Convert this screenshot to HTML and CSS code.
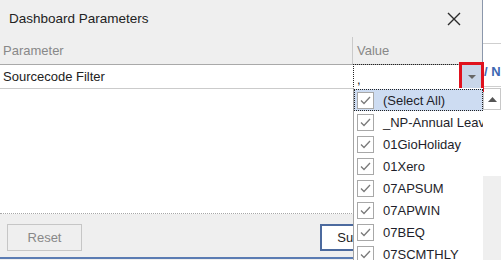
FILE: index.html
```html
<!DOCTYPE html>
<html>
<head>
<meta charset="utf-8">
<link rel="stylesheet" href="styles.css">
</head>
<body>
<div class="screen">
  <div class="dialog">
    <div class="titlebar">
      <span class="title">Dashboard Parameters</span>
      <svg class="close" width="14" height="14" viewBox="0 0 14 14"><path d="M1 1 L13 13 M13 1 L1 13" stroke="#2b2b2b" stroke-width="1.4" fill="none"/></svg>
    </div>
    <div class="grid-head">
      <div class="col-param">Parameter</div>
      <div class="col-value">Value</div>
    </div>
    <div class="grid-row">
      <div class="cell-param">Sourcecode Filter</div>
      <div class="cell-value">,</div>
    </div>
    <div class="grid-body"></div>
    <div class="footer">
      <button class="btn btn-reset">Reset</button>
      <button class="btn btn-primary">Submit</button>
    </div>
  </div>
  <div class="outside">
    <div class="out-top"></div>
    <div class="out-row"><span class="out-text">/ N</span></div>
    <div class="out-arrow">
      <svg width="9" height="5" viewBox="0 0 9 5"><path d="M0 5 L4.5 0 L9 5 Z" fill="#555"/></svg>
    </div>
    <div class="out-thumb"></div>
    <div class="out-track"></div>
  </div>

  <div class="dropbtn">
    <svg width="8" height="4" viewBox="0 0 8 4"><path d="M0 0 L8 0 L4 4 Z" fill="#666"/></svg>
  </div>

  <div class="droplist">
    <div class="item selected"><span class="chk"><svg width="11" height="9" viewBox="0 0 11 9"><path d="M1 4.5 L4 7.5 L10 1" stroke="#7a7a7a" stroke-width="1.3" fill="none"/></svg></span><span class="label">(Select All)</span></div>
    <div class="item"><span class="chk"><svg width="11" height="9" viewBox="0 0 11 9"><path d="M1 4.5 L4 7.5 L10 1" stroke="#7a7a7a" stroke-width="1.3" fill="none"/></svg></span><span class="label">_NP-Annual Leave</span></div>
    <div class="item"><span class="chk"><svg width="11" height="9" viewBox="0 0 11 9"><path d="M1 4.5 L4 7.5 L10 1" stroke="#7a7a7a" stroke-width="1.3" fill="none"/></svg></span><span class="label">01GioHoliday</span></div>
    <div class="item"><span class="chk"><svg width="11" height="9" viewBox="0 0 11 9"><path d="M1 4.5 L4 7.5 L10 1" stroke="#7a7a7a" stroke-width="1.3" fill="none"/></svg></span><span class="label">01Xero</span></div>
    <div class="item"><span class="chk"><svg width="11" height="9" viewBox="0 0 11 9"><path d="M1 4.5 L4 7.5 L10 1" stroke="#7a7a7a" stroke-width="1.3" fill="none"/></svg></span><span class="label">07APSUM</span></div>
    <div class="item"><span class="chk"><svg width="11" height="9" viewBox="0 0 11 9"><path d="M1 4.5 L4 7.5 L10 1" stroke="#7a7a7a" stroke-width="1.3" fill="none"/></svg></span><span class="label">07APWIN</span></div>
    <div class="item"><span class="chk"><svg width="11" height="9" viewBox="0 0 11 9"><path d="M1 4.5 L4 7.5 L10 1" stroke="#7a7a7a" stroke-width="1.3" fill="none"/></svg></span><span class="label">07BEQ</span></div>
    <div class="item"><span class="chk"><svg width="11" height="9" viewBox="0 0 11 9"><path d="M1 4.5 L4 7.5 L10 1" stroke="#7a7a7a" stroke-width="1.3" fill="none"/></svg></span><span class="label">07SCMTHLY</span></div>
  </div>
</div>
</body>
</html>
```

FILE: styles.css
```css
* { box-sizing: border-box; }
html, body { margin: 0; padding: 0; }
body {
  background: #efefef;
  font-family: "Liberation Sans", Arial, sans-serif;
  font-size: 13px;
  color: #222;
}
.screen {
  position: relative;
  width: 501px;
  height: 260px;
  overflow: hidden;
  display: flex;
  align-items: flex-start;
}
.dialog {
  width: 483px;
  height: 259px;
  flex: none;
  display: flex;
  flex-direction: column;
  background: #efefef;
  border-right: 1px solid #8b97ab;
  border-bottom: 2px solid #5b7cb3;
}
.titlebar {
  height: 37px;
  display: flex;
  align-items: center;
  padding-left: 9px;
  padding-right: 21px;
}
.title { color: #222; font-size: 13.5px; }
.close { margin-left: auto; }
.grid-head {
  height: 28px;
  display: flex;
  border-bottom: 1px solid #a9a9a9;
  color: #888;
}
.col-param {
  width: 353px;
  padding-left: 3px;
  border-right: 1px solid #cacaca;
  display: flex;
  align-items: center;
}
.col-value {
  padding-left: 4px;
  display: flex;
  align-items: center;
}
.grid-row {
  height: 24px;
  display: flex;
  background: #fff;
  border-bottom: 1px solid #cbcbcb;
}
.cell-param {
  width: 353px;
  padding-left: 3px;
  display: flex;
  align-items: center;
}
.cell-value {
  flex: 1;
  margin-top: -1px;
  height: 25px;
  border: 1px dotted #222;
  padding-left: 3px;
  padding-top: 5px;
  display: flex;
  align-items: center;
}
.grid-body {
  height: 125px;
  background: #fff;
  border-bottom: 1px dotted #a8a8a8;
}
.footer {
  flex: 1;
  display: flex;
  justify-content: space-between;
  align-items: flex-start;
  padding: 10px 87px 0 7px;
}
.btn {
  width: 75px;
  height: 27px;
  font-family: "Liberation Sans", Arial, sans-serif;
  font-size: 13px;
  background: #efefef;
  border: 1px solid #c6c6c6;
  color: #888;
  padding: 0;
}
.btn-primary {
  background: #fff;
  border: 2px solid #4c6a9e;
  color: #222;
}
.outside {
  flex: 1;
  height: 260px;
  display: flex;
  flex-direction: column;
  background: #fff;
}
.out-top {
  height: 44px;
  border-bottom: 1px solid #cfcfcf;
}
.out-row {
  height: 43px;
  border-bottom: 1px solid #cfcfcf;
  overflow: hidden;
  white-space: nowrap;
  padding-left: 1px;
  padding-top: 20px;
}
.out-text {
  color: #3d67b1;
  font-weight: bold;
  font-size: 13px;
}
.out-arrow {
  margin-top: 1px;
  height: 22px;
  border: 1px solid #c8c8c8;
  display: flex;
  align-items: center;
  justify-content: center;
  background: #fff;
}
.out-thumb { height: 66px; background: #fff; }
.out-track { flex: 1; background: #efefef; }
.dropbtn {
  position: absolute;
  left: 459px;
  top: 62px;
  width: 25px;
  height: 30px;
  border: 3px solid #e0121e;
  background: #c9d6e9;
  display: flex;
  align-items: center;
  justify-content: center;
}
.droplist {
  position: absolute;
  left: 353px;
  top: 88px;
  width: 130px;
  height: 172px;
  background: #fff;
  border-left: 1px solid #a4a4a4;
  padding-top: 1px;
  overflow: hidden;
}
.item {
  height: 22px;
  display: flex;
  align-items: center;
  padding-left: 3px;
  white-space: nowrap;
  overflow: hidden;
}
.item.selected {
  background: #cddcf2;
  border: 1px dotted #222;
  padding-left: 2px;
}
.chk {
  width: 17px;
  height: 17px;
  flex: none;
  border: 1px solid #a8a8a8;
  background: #fff;
  display: flex;
  align-items: center;
  justify-content: center;
  margin-right: 9px;
}
.label { color: #1e1e2a; }
```
